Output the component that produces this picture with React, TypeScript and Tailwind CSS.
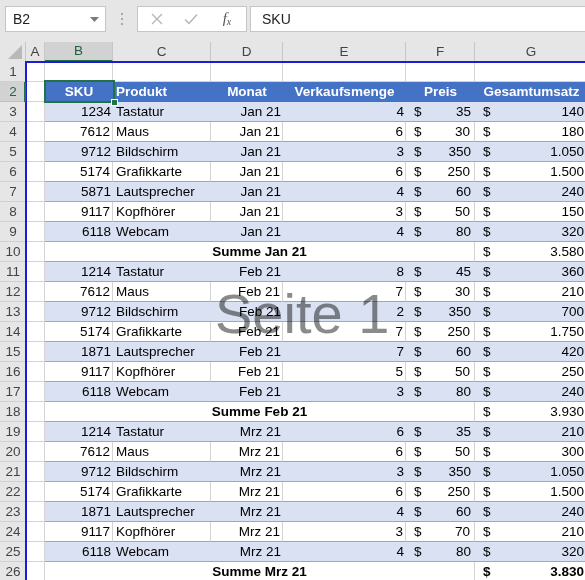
import React from 'react';

type Item = [string, string, string, string, string];

const months: { label: string; items: Item[]; sum: string }[] = [
  {
    label: 'Jan 21',
    items: [
      ['1234', 'Tastatur', '4', '35', '140'],
      ['7612', 'Maus', '6', '30', '180'],
      ['9712', 'Bildschirm', '3', '350', '1.050'],
      ['5174', 'Grafikkarte', '6', '250', '1.500'],
      ['5871', 'Lautsprecher', '4', '60', '240'],
      ['9117', 'Kopfhörer', '3', '50', '150'],
      ['6118', 'Webcam', '4', '80', '320'],
    ],
    sum: '3.580',
  },
  {
    label: 'Feb 21',
    items: [
      ['1214', 'Tastatur', '8', '45', '360'],
      ['7612', 'Maus', '7', '30', '210'],
      ['9712', 'Bildschirm', '2', '350', '700'],
      ['5174', 'Grafikkarte', '7', '250', '1.750'],
      ['1871', 'Lautsprecher', '7', '60', '420'],
      ['9117', 'Kopfhörer', '5', '50', '250'],
      ['6118', 'Webcam', '3', '80', '240'],
    ],
    sum: '3.930',
  },
  {
    label: 'Mrz 21',
    items: [
      ['1214', 'Tastatur', '6', '35', '210'],
      ['7612', 'Maus', '6', '50', '300'],
      ['9712', 'Bildschirm', '3', '350', '1.050'],
      ['5174', 'Grafikkarte', '6', '250', '1.500'],
      ['1871', 'Lautsprecher', '4', '60', '240'],
      ['9117', 'Kopfhörer', '3', '70', '210'],
      ['6118', 'Webcam', '4', '80', '320'],
    ],
    sum: '3.830',
  },
];

const GRID = 'grid grid-cols-[26px_19px_68px_98px_72px_123px_69px_113px] h-[20px]';

function RowHead({ n, active = false }: { n: number; active?: boolean }) {
  return (
    <div
      className={`flex items-center justify-center border-b ${
        active ? 'bg-[#d2d2d2] border-b-[#c0c0c0] text-[#1e6b41]' : 'bg-[#e6e6e6] border-b-[#d0d0d0] text-[#444]'
      }`}
    >
      {n}
    </div>
  );
}

function ACell() {
  return <div className="bg-white border-r border-b border-[#d4d4d4]" />;
}

function DataRow({ n, item, month }: { n: number; item: Item; month: string }) {
  const banded = n % 2 === 1;
  const base = banded
    ? 'bg-[#d9e1f2] border-b border-b-[#8ea9db]'
    : 'bg-white border-b border-b-[#8ea9db] border-r border-r-[#d4d4d4]';
  return (
    <div className={GRID}>
      <RowHead n={n} />
      <ACell />
      <div className={`${base} flex items-center justify-end pr-[2px]`}>{item[0]}</div>
      <div className={`${base} flex items-center pl-[3px] whitespace-nowrap`}>{item[1]}</div>
      <div className={`${base} flex items-center justify-end pr-[2px]`}>{month}</div>
      <div className={`${base} flex items-center justify-end pr-[2px]`}>{item[2]}</div>
      <div className={`${base} flex items-center justify-between pl-[8px] pr-[4px]`}>
        <span>$</span>
        <span>{item[3]}</span>
      </div>
      <div className={`${banded ? 'bg-[#d9e1f2]' : 'bg-white'} border-b border-b-[#8ea9db] flex items-center justify-between pl-[8px] pr-[4px]`}>
        <span>$</span>
        <span>{item[4]}</span>
      </div>
    </div>
  );
}

function SumRow({ n, label, sum, bold }: { n: number; label: string; sum: string; bold?: boolean }) {
  return (
    <div className={GRID}>
      <RowHead n={n} />
      <ACell />
      <div className="col-span-5 bg-white border-b border-b-[#8ea9db] border-r border-r-[#d4d4d4] flex items-center justify-center font-bold">
        Summe {label}
      </div>
      <div className={`bg-white border-b border-b-[#8ea9db] flex items-center justify-between pl-[8px] pr-[4px] ${bold ? 'font-bold' : ''}`}>
        <span>$</span>
        <span>{sum}</span>
      </div>
    </div>
  );
}

function FormulaBar() {
  return (
    <div className="h-[42px] bg-[#e6e6e6] flex items-start pt-[6px] text-[14px]">
      {/* name box */}
      <div className="ml-[5px] w-[101px] h-[26px] bg-white border border-[#c6c6c6] flex items-center justify-between pl-[7px] pr-[6px] text-[#222]">
        <span>B2</span>
        <svg width="9" height="5" viewBox="0 0 9 5">
          <polygon points="0,0 9,0 4.5,5" fill="#7a7a7a" />
        </svg>
      </div>
      {/* dots */}
      <div className="w-[31px] h-[26px] flex flex-col items-center justify-center gap-[3px]">
        <div className="w-[2px] h-[2px] bg-[#a8a8a8]" />
        <div className="w-[2px] h-[2px] bg-[#a8a8a8]" />
        <div className="w-[2px] h-[2px] bg-[#a8a8a8]" />
      </div>
      {/* buttons */}
      <div className="w-[110px] h-[26px] bg-white border border-[#c6c6c6] flex items-center">
        <div className="w-[36px] flex justify-center pl-[2px]">
          <svg width="12" height="12" viewBox="0 0 12 12">
            <path d="M1 1 L11 11 M11 1 L1 11" stroke="#b4b4b4" strokeWidth="1.3" fill="none" />
          </svg>
        </div>
        <div className="w-[34px] flex justify-center">
          <svg width="14" height="12" viewBox="0 0 14 12">
            <path d="M1 6.5 L5 10.5 L13 1.5" stroke="#b4b4b4" strokeWidth="1.4" fill="none" />
          </svg>
        </div>
        <div className="w-[38px] flex justify-center font-['Liberation_Serif',serif] italic text-[#555] text-[15px] leading-none">
          <span>f</span>
          <span className="text-[10px] mt-[6px]">x</span>
        </div>
      </div>
      {/* formula input */}
      <div className="ml-[3px] flex-1 h-[26px] bg-white border border-r-0 border-[#c6c6c6] flex items-center pl-[11px] text-[#222]">
        SKU
      </div>
    </div>
  );
}

function ColumnHeaders() {
  const letters = ['A', 'B', 'C', 'D', 'E', 'F', 'G'];
  return (
    <div className={GRID}>
      <div className="bg-[#e6e6e6] border-r border-[#c6c6c6] flex items-end justify-end pr-[3px] pb-[3px]">
        <svg width="14" height="14" viewBox="0 0 14 14">
          <polygon points="14,0 14,14 0,14" fill="#b9b9b9" />
        </svg>
      </div>
      {letters.map((l) =>
        l === 'B' ? (
          <div key={l} className="bg-[#d2d2d2] border-r border-r-[#c6c6c6] border-b-2 border-b-[#217346] flex items-center justify-center text-[#1e5e3a]">
            {l}
          </div>
        ) : (
          <div key={l} className="bg-[#e6e6e6] border-r border-[#c6c6c6] flex items-center justify-center text-[#444]">
            {l}
          </div>
        )
      )}
    </div>
  );
}

export default function App() {
  let n = 3;
  const body: React.ReactNode[] = [];
  months.forEach((m, mi) => {
    m.items.forEach((it) => {
      body.push(<DataRow key={n} n={n} item={it} month={m.label} />);
      n++;
    });
    body.push(<SumRow key={n} n={n} label={m.label} sum={m.sum} bold={mi === 2} />);
    n++;
  });

  return (
    <div className="relative w-[585px] h-[580px] overflow-hidden bg-white font-['Liberation_Sans',Arial,sans-serif] text-[13.5px] text-black leading-none">
      <FormulaBar />
      <ColumnHeaders />

      {/* row 1 */}
      <div className={GRID}>
        <RowHead n={1} />
        <ACell />
        {[0, 1, 2, 3, 4, 5].map((i) => (
          <div key={i} className="bg-white border-r border-b border-[#d4d4d4]" />
        ))}
      </div>

      {/* row 2: table header */}
      <div className={GRID}>
        <RowHead n={2} active />
        <ACell />
        <div className="bg-[#4472c4] text-white font-bold flex items-center justify-center">SKU</div>
        <div className="bg-[#4472c4] text-white font-bold flex items-center pl-[3px]">Produkt</div>
        <div className="bg-[#4472c4] text-white font-bold flex items-center justify-center">Monat</div>
        <div className="bg-[#4472c4] text-white font-bold flex items-center justify-center">Verkaufsmenge</div>
        <div className="bg-[#4472c4] text-white font-bold flex items-center justify-center">Preis</div>
        <div className="bg-[#4472c4] text-white font-bold flex items-center justify-center">Gesamtumsatz</div>
      </div>

      {body}

      {/* page break preview frame */}
      <div className="absolute left-[25px] top-[61px] w-[2px] h-[530px] bg-[#1c1cd6]" />
      <div className="absolute left-[25px] top-[61px] w-[570px] h-[2px] bg-[#1c1cd6]" />
      <div className="absolute left-[24px] top-[82px] w-[2px] h-[20px] bg-[#217346]" />

      {/* selection */}
      <div className="absolute left-[44px] top-[80px] w-[71px] h-[23px] border-2 border-[#217346]" />
      <div className="absolute left-[111px] top-[99px] w-[7px] h-[7px] bg-[#217346] border border-white" />

      {/* watermark */}
      <div className="absolute left-[215px] top-[286px] text-[56px] leading-none text-[#8a8a8a] mix-blend-multiply pointer-events-none whitespace-nowrap">
        Seite 1
      </div>
    </div>
  );
}
